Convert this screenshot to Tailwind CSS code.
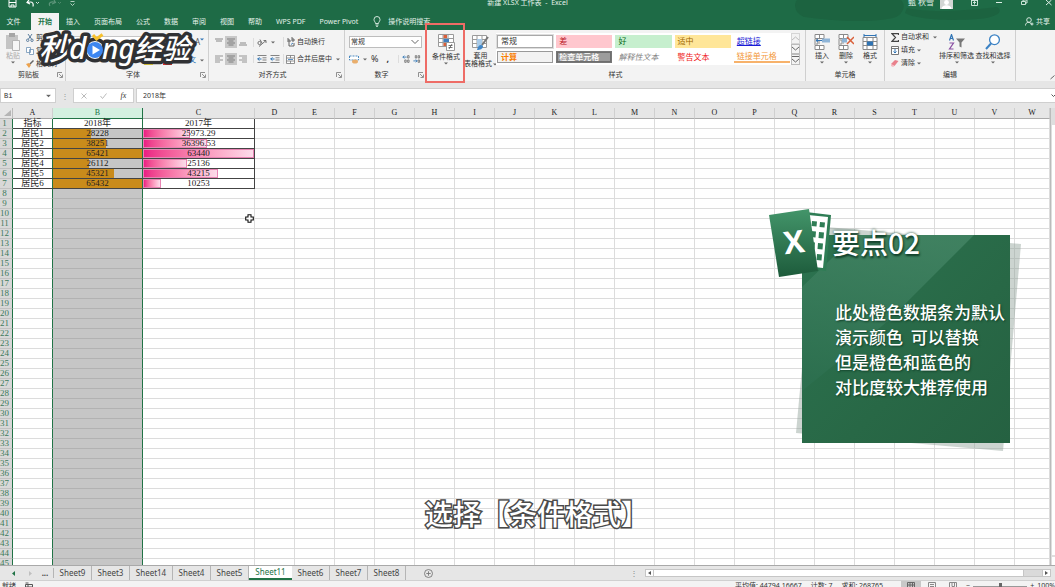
<!DOCTYPE html>
<html lang="zh-CN">
<head>
<meta charset="utf-8">
<title>新建 XLSX 工作表 - Excel</title>
<script src="https://cdn.jsdelivr.net/npm/@tailwindcss/browser@4"></script>
</head>
<body class="relative flex h-screen flex-col overflow-hidden bg-[#e6e6e6] font-['Noto_Sans','Noto_Sans_CJK_SC',sans-serif] text-[7px] leading-[10px] text-[#333]">

<header class="relative shrink-0 bg-[#1e6b46] text-[#e4f2ea]">
  <svg class="absolute right-0 top-0 h-[30px] w-[260px]" viewBox="0 0 260 30" fill="#1a5d3c" aria-hidden="true"><path d="M2 0h104c6 6 1 16-8 18-30 6-66 2-88-1C0 14-2 5 2 0z" opacity=".6"/><path d="M112 8c20 5 60 3 90-1 8 5-2 11-20 12-26 2-60 1-72-6z" opacity=".6"/></svg>
  <div class="relative flex h-3 items-start justify-between overflow-hidden">
    <div class="flex w-1/3 items-start gap-[9px] pl-2">
      <button aria-label="保存"><svg width="9" height="8" viewBox="0 0 9 8" fill="none" stroke="#fff"><path d="M1 0v7h7V0M1 2.5h7M3 7V5h3v2"/></svg></button>
      <button aria-label="撤消"><svg width="13" height="8" viewBox="0 0 13 8" fill="none" stroke="#fff" stroke-width="1.2"><path d="M3 0 1 2.5 4 4M1 2.5c4-1 7-1 6 4"/><path d="m10 2 1.500 1.500L13 2" stroke-width=".8"/></svg></button>
      <button aria-label="恢复"><svg width="13" height="8" viewBox="0 0 13 8" fill="none" stroke="#5c9479" stroke-width="1.200"><path d="m6 0 1.500 2.500L4 4M7 2.500C3 1 0 3 2 6"/><path d="m10 2 1.500 1.500L13 2" stroke-width=".8"/></svg></button>
      <button aria-label="自定义"><svg width="5" height="7" viewBox="0 0 5 7" fill="none" stroke="#d5e8dd" stroke-width=".8"><path d="M.5 1.500h4M.5 3.500l2 2 2-2"/></svg></button>
    </div>
    <h1 class="-mt-[2px] text-[7px]">新建 XLSX 工作表 &nbsp;-&nbsp; Excel</h1>
    <div class="flex w-1/3 items-start justify-end gap-[18px] pr-[3px]">
      <div class="flex gap-1.5"><span class="-mt-[3px] text-[8px]">甄 秋雪</span>
      <svg width="13" height="9" viewBox="0 0 13 9"><path fill="#d2d6d4" d="M0 0h13v9H0z"/><circle cx="6.500" cy="2.500" r="2.400" fill="#fff"/><path d="M1.500 9c0-5 10-5 10 0z" fill="#fff"/></svg></div>
      <button aria-label="功能区显示选项"><svg width="7" height="6" viewBox="0 0 7 6" fill="none" stroke="#dcefe5" stroke-width=".9"><path d="M.5-1v6.500h6V-1M.5.5h6M3.500 4.500v-3M2 3l1.500-1.500L5 3"/></svg></button>
      <button aria-label="最小化"><svg width="7" height="5" viewBox="0 0 7 5" stroke="#dcefe5"><path d="M0 2.500h6"/></svg></button>
      <button aria-label="还原"><svg width="7" height="6" viewBox="0 0 7 6" fill="none" stroke="#dcefe5" stroke-width=".9"><path d="M.5 1.500h4v3h-4zM2 1V0h4v3H5"/></svg></button>
      <button aria-label="关闭"><svg width="6" height="6" viewBox="0 0 6 6" stroke="#dcefe5"><path d="m0 0 5.500 5M5.500 0 0 5"/></svg></button>
    </div>
  </div>
  <nav class="relative flex h-[18px] items-stretch pr-[5px] pt-px">
    <button class="w-[31px] pr-1">文件</button>
    <button class="w-7 bg-[#f3f3f3] font-bold text-[#217346]">开始</button>
    <button class="px-[7px]">插入</button><button class="px-[7px]">页面布局</button><button class="px-[7px]">公式</button><button class="px-[7px]">数据</button><button class="px-[7px]">审阅</button><button class="px-[7px]">视图</button><button class="px-[7px]">帮助</button><button class="px-[7px]">WPS PDF</button><button class="px-[7px]">Power Pivot</button>
    <button class="ml-2 flex items-center gap-[7px]"><svg width="8" height="11" viewBox="0 0 8 11" fill="none" stroke="#e4f2ea" stroke-width=".9"><path d="M2.500 7.500C2.500 6 1 5.500 1 3.500a3 3 0 0 1 6 0c0 2-1.500 2.500-1.500 4zM2.500 9h3M3 10.300h2"/></svg>操作说明搜索</button>
    <button class="ml-auto flex items-center gap-[2px]"><svg width="9" height="9" viewBox="0 0 9 9" fill="none" stroke="#e4f2ea" stroke-width=".9"><circle cx="4" cy="3" r="2.300"/><path d="M.5 8.500c0-4 5-4 6-1M5.500 7h3M7 5.500v3"/></svg>共享</button>
  </nav>
</header>

<svg class="hidden" aria-hidden="true">
  <symbol id="dd" viewBox="0 0 4 3"><path d="M0 .5h4L2 2.500z" fill="#666"/></symbol>
  <symbol id="launch" viewBox="0 0 6 6"><path d="M.5 5V.5H5M2 2l3 3M5.500 2.500v3h-3" fill="none" stroke="#777" stroke-width=".8"/></symbol>
  <symbol id="al" viewBox="0 0 8 8"><path d="M0 1h8M0 3h5M0 5h8M0 7h5" stroke="#8a8a8a" stroke-width=".9"/></symbol>
  <symbol id="ac" viewBox="0 0 8 8"><path d="M0 1h8M1.500 3h5M0 5h8M1.500 7h5" stroke="#777" stroke-width=".9"/></symbol>
  <symbol id="ar" viewBox="0 0 8 8"><path d="M0 1h8M3 3h5M0 5h8M3 7h5" stroke="#8a8a8a" stroke-width=".9"/></symbol>
  <symbol id="ind" viewBox="0 0 9 8"><path d="M0 .5h9M5 2.800h4M5 5h4M0 7.500h9" stroke="#777" stroke-width=".9"/><path d="M0 4h4M2 2.300.3 4 2 5.700" stroke="#2f74b5" fill="none"/></symbol>
  <symbol id="cells" viewBox="0 0 16 16"><path d="M1 .5h9v4H1zM5.500.5v4M1 11.500h9v4H1zM5.500 11.500v4M1 5v6M3 5v2h3M3 11V9h3" fill="#fff" stroke="#8a8a8a"/></symbol>
</svg>

<section aria-label="功能区" class="flex h-[51px] shrink-0 bg-[#f3f3f3]">
  <div class="flex w-[66px] shrink-0 flex-col border-r border-[#cfcfcf]">
    <div class="flex h-10 gap-[5px] pl-[5px] pt-[3px]">
      <button class="flex w-4 flex-col items-center text-[#aaa]"><svg width="16" height="18" viewBox="0 0 16 18"><path d="M1 2h12v14H1z" fill="#c4c4c4"/><path d="M4 0h6v4H4z" fill="#a5a5a5"/><path d="M7.500 7.500h7v10h-7z" fill="#f6f6f6" stroke="#b5b5b5"/></svg>粘贴<svg width="4" height="3"><use href="#dd"/></svg></button>
      <div class="flex flex-col gap-[3px]">
        <button class="flex items-center gap-[2px]"><svg width="8" height="8" viewBox="0 0 8 8" fill="none" stroke="#5b7d9d"><path d="m2 0 3.500 5M6 0 2.500 5"/><circle cx="1.700" cy="6.300" r="1.200"/><circle cx="6" cy="6.300" r="1.200"/></svg>剪切</button>
        <button class="flex items-center gap-[2px]"><svg width="8" height="8" viewBox="0 0 8 8" fill="#fff" stroke="#6f93b5" stroke-width=".8"><path d="M.5.5h4v5h-4zM3.500 2.500h4v5h-4z"/></svg>复制</button>
        <button class="flex items-center gap-[2px]"><svg width="8" height="8" viewBox="0 0 8 8"><path d="m0 4 3-1 2 2-2 3z" fill="#eda24c"/><path d="m4 4 3.500-3.500" stroke="#666" stroke-width="1.500"/></svg>格式刷</button>
      </div>
    </div>
    <div class="flex items-center"><span class="flex-1 text-center">剪贴板</span><svg class="mr-0.5" width="6" height="6"><use href="#launch"/></svg></div>
  </div>

  <div class="flex w-[143px] shrink-0 flex-col border-r border-[#cfcfcf]">
    <div class="flex h-10 flex-col justify-between pb-[5px] pl-1 pr-1 pt-[6px]">
      <div class="flex items-center gap-1"><input aria-label="字体" class="h-3 w-[80px] border border-[#c6c6c6] bg-white px-1 text-[7px]"><input aria-label="字号" class="h-3 w-6 border border-[#c6c6c6] bg-white px-1 text-[7px]"><span class="ml-auto flex text-[8px] text-[#555]">A<svg class="mt-px" width="4" height="3" viewBox="0 0 4 3"><path d="M0 .5h4L2 2.500z" fill="#2f74b5"/></svg></span></div>
      <div class="flex items-center">
        <button aria-label="填充颜色" class="ml-[74px] h-[3px] w-[9px] self-end bg-[#fbe33a]"></button><button aria-label="字体颜色" class="ml-[10px] h-[3px] w-[9px] self-end bg-[#d8302b]"></button>
        <button class="ml-auto flex items-center gap-1 text-[7px] text-[#2f74b5]">文<svg width="4" height="3"><use href="#dd"/></svg></button></div>
    </div>
    <div class="flex items-center"><span class="flex-1 text-center">字体</span><svg class="mr-0.5" width="6" height="6"><use href="#launch"/></svg></div>
  </div>

  <div class="flex w-[136px] shrink-0 flex-col border-r border-[#cfcfcf]">
    <div class="flex h-10 flex-col gap-[5px] pl-[4px] pt-[6px]">
      <div class="flex h-3 items-center">
        <button aria-label="顶端对齐" class="grid h-3 w-3 place-items-center"><svg width="8" height="8" viewBox="0 0 8 8"><path d="M0 1h8M1 3h6" stroke="#888"/></svg></button>
        <button aria-label="垂直居中" class="grid h-3 w-3 place-items-center bg-[#c8c8c8]"><svg width="8" height="8"><use href="#ac"/></svg></button>
        <button aria-label="底端对齐" class="mr-1 grid h-3 w-3 place-items-center"><svg width="8" height="8" viewBox="0 0 8 8"><path d="M0 7h8M1 5h6" stroke="#888"/></svg></button>
        <button aria-label="方向" class="flex w-[30px] items-center gap-1 border-l border-[#ddd] pl-[3px]"><svg width="10" height="9" viewBox="0 0 10 9" fill="none" stroke="#666" stroke-width=".9"><circle cx="2.500" cy="5" r="1.600"/><path d="M3 1.500 5 5M2 8.500 9 2.500M9 5V2.500H6.500"/></svg><svg width="4" height="3"><use href="#dd"/></svg></button>
        <button class="flex items-center gap-[2px] border-l border-[#ddd] pl-[3px]"><svg width="8" height="10" viewBox="0 0 8 10" fill="none" stroke="#555" stroke-width=".9"><path d="M1 1v4h2V3H1M5 0v4h2V2H5M2 6v3h5V6"/><path d="M6 6 4 7.500" stroke="#2f74b5"/></svg>自动换行</button>
      </div>
      <div class="flex h-3 items-center">
        <button aria-label="左对齐" class="grid h-3 w-3 place-items-center"><svg width="8" height="8"><use href="#al"/></svg></button>
        <button aria-label="居中" class="grid h-3 w-3 place-items-center bg-[#c8c8c8]"><svg width="8" height="8"><use href="#ac"/></svg></button>
        <button aria-label="右对齐" class="mr-1 grid h-3 w-3 place-items-center"><svg width="8" height="8"><use href="#ar"/></svg></button>
        <span class="flex w-[30px] gap-[3px] border-l border-[#ddd] pl-[3px]"><svg width="10" height="8"><use href="#ind"/></svg><svg width="10" height="8"><use href="#ind"/></svg></span>
        <button class="flex items-center gap-[2px] border-l border-[#ddd] pl-[2px]"><svg width="9" height="9" viewBox="0 0 9 9" fill="#fff" stroke="#777" stroke-width=".8"><path d="M.5.5h8v8h-8zM.5 3h8M.5 6h8M4.500.5V3M4.500 6v2.500"/><path d="M2 4.500h5" stroke="#2f74b5"/></svg>合并后居中<svg class="ml-[2px]" width="4" height="3"><use href="#dd"/></svg></button>
      </div>
    </div>
    <div class="flex items-center"><span class="flex-1 text-center">对齐方式</span><svg class="mr-[2px]" width="6" height="6"><use href="#launch"/></svg></div>
  </div>

  <div class="flex w-[81px] shrink-0 flex-col">
    <div class="flex h-10 flex-col gap-[5px] px-1 pt-[6px]">
      <div class="flex h-3 items-center border border-[#bdbdbd] bg-white pl-px pr-[2px]"><select aria-label="数字格式" class="flex-1 appearance-none text-[7px] leading-[10px]"><option>常规</option></select><svg width="8" height="6" viewBox="0 0 8 6" fill="none" stroke="#666"><path d="m.5 1 3.500 3.500L7.500 1"/></svg></div>
      <div class="flex h-3 items-center gap-1 text-[9px]"><svg width="10" height="9" viewBox="0 0 10 9"><path d="M.5 1h9v4h-9z" fill="#fff" stroke="#4c8ac0" stroke-dasharray="2 1"/><ellipse cx="6" cy="6.500" rx="3" ry="2" fill="#e9ae6c"/></svg><svg width="4" height="3"><use href="#dd"/></svg><button>%</button><button class="ml-1 font-bold">,</button><svg class="ml-auto border-l border-[#ddd]" width="24" height="8" viewBox="0 0 24 8"><g fill="none" stroke="#666" stroke-width=".8"><path d="M9 .5h1.500v2.500H9zM6 5h1.500v2.500H6zM9 5h1.500v2.500H9zM17 .5h1.500V3H17zM20 .5h1.500V3H20zM20 5h1.500v2.500H20z"/></g><path d="M4 2h4M5.500.5 4 2l1.500 1.500M15 6h4M17.500 4.500 19 6l-1.500 1.500" stroke="#2f74b5" fill="none" stroke-width=".9"/></svg></div>
    </div>
    <div class="flex items-center"><span class="flex-1 text-center">数字</span><svg class="mr-0.5" width="6" height="6"><use href="#launch"/></svg></div>
  </div>

  <div class="flex w-[380px] shrink-0 flex-col border-r border-[#cfcfcf]">
    <div class="flex h-10 pt-[3px]">
      <button class="flex w-10 flex-col items-center pt-px"><svg class="mb-px" width="17" height="17" viewBox="0 0 17 17"><path d="M.5.5h15v12H.5zM.5 4.500h15M.5 8.500h15M5 .5v12M10 .5v12" fill="#fff" stroke="#9a9a9a"/><path d="M5.500 1H9v3H5.500zM5.500 9H8v3H5.500z" fill="#d9603b"/><path d="M5.500 5H11v3H5.500z" fill="#3f7fc0"/><path d="M8.500 8.500h8v8h-8z" fill="#fff" stroke="#999"/><path d="M10.500 11.500h4M10.500 13.500h4M14 10l-3 5" stroke="#555" stroke-width=".8"/></svg>条件格式<svg width="4" height="3"><use href="#dd"/></svg></button>
      <button class="flex w-[29px] flex-col items-center pt-[2px] leading-[8px]"><svg class="mb-px" width="17" height="16" viewBox="0 0 17 16"><path d="M.5.5h14v12H.5zM.5 4.500h14M.5 8.500h14M5 .5v12M10 .5v12" fill="#fff" stroke="#9a9a9a"/><path d="M5 4h5v8H5z" fill="#a9cbe8"/><path d="m16 2-6 8" stroke="#777" stroke-width="2"/><path d="M5 15c1-5 4-6 6-4 0 3-3 4-6 4z" fill="#3f86c8"/></svg>套用<span class="flex items-center whitespace-nowrap">表格格式<svg class="ml-px" width="4" height="3"><use href="#dd"/></svg></span></button>
      <div class="ml-px grid h-8 w-[295px] grid-cols-5 gap-x-[3px] gap-y-[3px] bg-white px-px py-[2px] text-left text-[8px] leading-[10px]">
        <button class="border border-[#a9a9a9] px-[3px] text-left outline-1 outline-[#ddd]">常规</button>
        <button class="bg-[#ffc7ce] px-[3px] text-left text-[#b8121c]">差</button>
        <button class="bg-[#c6efce] px-[3px] text-left text-[#0b6b18]">好</button>
        <button class="bg-[#ffe699] px-[3px] text-left text-[#9c6500]">适中</button>
        <button class="px-[3px] text-left text-[#1a1ad6] underline">超链接</button>
        <button class="border border-[#999] bg-[#f2f2f2] px-[3px] text-left font-bold text-[#fa7d00]">计算</button>
        <button class="border border-[#777] bg-[#9c9c9c] px-[2px] text-left font-medium text-white outline-1 -outline-offset-2 outline-[#6e6e6e]">检查单元格</button>
        <button class="px-[3px] text-left italic text-[#7f7f7f]">解释性文本</button>
        <button class="px-[3px] text-left text-[#f01616]">警告文本</button>
        <button class="border-b-2 border-[#f7b26b] px-[3px] text-left text-[#f39a3c]">链接单元格</button>
      </div>
      <div class="grid h-8 w-[9px] grid-rows-3">
        <button aria-label="上一行" class="grid place-items-center border border-[#d5d5d5]"><svg width="7" height="5" viewBox="0 0 7 5" fill="none" stroke="#bbb"><path d="m0 4 3.500-3L7 4"/></svg></button>
        <button aria-label="下一行" class="grid place-items-center border border-[#bbb]"><svg width="7" height="5" viewBox="0 0 7 5" fill="none" stroke="#666"><path d="m0 1 3.500 3L7 1"/></svg></button>
        <button aria-label="其他" class="grid place-items-center border border-[#bbb]"><svg width="7" height="7" viewBox="0 0 7 7" fill="none" stroke="#666"><path d="M0 .5h7M0 3l3.500 3L7 3"/></svg></button>
      </div>
    </div>
    <div class="text-center">样式</div>
  </div>

  <div class="flex w-[79px] shrink-0 flex-col border-r border-[#cfcfcf]">
    <div class="flex h-10 gap-[8px] pl-[8px] pt-1">
      <button class="flex w-4 flex-col items-center whitespace-nowrap"><svg class="mb-px shrink-0" width="16" height="16" viewBox="0 0 16 16"><use href="#cells"/><path d="M8 4.500h8v4H8z" fill="#8fb4d6"/><path d="M2 6.500h6M4 4.800 2 6.500l2 1.700" stroke="#2f74b5" fill="none"/></svg>插入<svg width="4" height="3"><use href="#dd"/></svg></button>
      <button class="flex w-4 flex-col items-center whitespace-nowrap"><svg class="mb-px shrink-0" width="16" height="16" viewBox="0 0 16 16"><use href="#cells"/><path d="M4 4.500h5v4H4z" fill="#8fb4d6"/><path d="m9 3 7 7M16 3l-7 7" stroke="#d9603b" stroke-width="1.500"/></svg>删除<svg width="4" height="3"><use href="#dd"/></svg></button>
      <button class="flex w-4 flex-col items-center whitespace-nowrap"><svg class="mb-px shrink-0" width="16" height="16" viewBox="0 0 16 16"><path d="M1 3.500h14v12H1zM1 7.500h14M1 11.500h14M5 3.500v12M11 3.500v12" fill="#fff" stroke="#8a8a8a"/><path d="M5 7.500h6v4H5z" fill="#2f74b5"/><path d="M2 1.500h12M2 0v3M14 0v3" stroke="#2f74b5"/></svg>格式<svg width="4" height="3"><use href="#dd"/></svg></button>
    </div>
    <div class="text-center">单元格</div>
  </div>

  <div class="flex w-[131px] shrink-0 flex-col border-r border-[#cfcfcf]">
    <div class="flex h-10 pl-[6px] pt-[2px]">
      <div class="flex w-[47px] flex-col gap-[3px]">
        <button class="flex items-center gap-[2px] whitespace-nowrap"><svg width="8" height="9" viewBox="0 0 8 9" fill="none" stroke="#444" stroke-width="1.200"><path d="M7.500 2V.7H1L4.500 4.500 1 8.300h6.500V7"/></svg>自动求和<svg class="ml-0.5" width="4" height="3"><use href="#dd"/></svg></button>
        <button class="flex items-center gap-[2px]"><svg width="8" height="9" viewBox="0 0 8 9" fill="#fff" stroke="#777"><path d="M.5.5h7v8h-7zM.5 2.500h7"/><path d="M4 3v4M2.500 5.500 4 7l1.500-1.500" stroke="#2f74b5"/></svg>填充<svg width="4" height="3"><use href="#dd"/></svg></button>
        <button class="flex items-center gap-[2px]"><svg width="8" height="8" viewBox="0 0 8 8"><path d="m0 5 4-4 3.500 1-4 5z" fill="#e9808c"/><path d="m0 5 3.500 2L2 8 0 7z" fill="#f5b9c0"/></svg>清除<svg width="4" height="3"><use href="#dd"/></svg></button>
      </div>
      <button class="flex w-[37px] flex-col items-center whitespace-nowrap pt-[2px]"><svg class="mb-px" width="18" height="16" viewBox="0 0 18 16" fill="none" stroke-width="1.200"><path d="m1.500 6.500 2-6 2 6M2 4.500h3" stroke="#2f74b5"/><path d="M1.500 9h4l-4 6h4" stroke="#8a4fa3"/><path d="M8 4.500h9l-3.500 4v5l-2-1V8.500z" fill="#777"/></svg>排序和筛选<svg width="4" height="3"><use href="#dd"/></svg></button>
      <button class="flex w-9 flex-col items-center whitespace-nowrap pt-[2px]"><svg class="mb-px" width="16" height="16" viewBox="0 0 16 16" fill="none"><circle cx="9.500" cy="5.700" r="4.900" stroke="#3b82c4" stroke-width="1.300" fill="#fff"/><path d="m6 9.500-5 5.500" stroke="#3b82c4" stroke-width="2"/></svg>查找和选择<svg width="4" height="3"><use href="#dd"/></svg></button>
    </div>
    <div class="text-center">编辑</div>
  </div>
  <button aria-label="折叠功能区" class="ml-auto self-end"><svg width="5" height="6" viewBox="0 0 5 6" fill="none" stroke="#666"><path d="m.5 4 4-3.500"/></svg></button>
</section>

<div class="flex h-[27px] shrink-0 items-start pt-[7px]">
  <div class="flex h-[15px] w-[56px] items-center border border-[#cfcfcf] bg-white pr-1"><input aria-label="名称框" value="B1" class="min-w-0 flex-1 pl-[3px] font-['Liberation_Mono',monospace] text-[7px]"><svg width="5" height="4" viewBox="0 0 4 3"><use href="#dd"/></svg></div>
  <span class="grid h-[15px] w-[17px] place-items-center text-[8px] text-[#999]">⋮</span>
  <div class="flex h-[15px] w-[61px] items-center justify-around border border-[#cfcfcf] bg-white">
    <button aria-label="取消"><svg width="6" height="6" viewBox="0 0 6 6" stroke="#bbb"><path d="m.5.5 5 5M5.500.5l-5 5"/></svg></button>
    <button aria-label="输入"><svg width="7" height="6" viewBox="0 0 7 6" fill="none" stroke="#bbb"><path d="m.5 3 2 2.500 4-5"/></svg></button>
    <button aria-label="插入函数" class="font-['Liberation_Serif',serif] text-[8px] italic">fx</button>
  </div>
  <div class="ml-[2px] flex h-[15px] flex-1 items-center border border-r-0 border-[#cfcfcf] bg-white"><input aria-label="编辑栏" value="2018年" class="min-w-0 flex-1 pl-[6px] text-[7px]"><svg width="4" height="5" viewBox="0 0 4 5" fill="none" stroke="#555"><path d="m.5 1.500 2 2 2-2"/></svg></div>
</div>

<main class="flex min-h-0 flex-1 overflow-hidden">
  <div class="min-w-0 flex-1 overflow-hidden border-r border-[#bbb] bg-white">
    <table class="w-full table-fixed border-separate border-spacing-0 text-center font-['Liberation_Serif','Noto_Sans_CJK_SC',serif] text-[9px] leading-[9px] text-[#222]">
      <colgroup id="cols"></colgroup>
      <thead><tr id="head"></tr></thead>
      <tbody id="body"></tbody>
    </table>
  </div>
  <div class="flex w-1 shrink-0 flex-col justify-end bg-[#dedede] pl-px"><div class="mb-[2px] h-[430px] bg-white"></div><button aria-label="向下滚动" class="h-2 bg-white"></button></div>
</main>

<footer class="shrink-0">
  <div class="flex h-[15px] items-center border-t border-[#a9a9a9] text-[8px] text-[#444]">
    <svg class="ml-3 mr-[9px]" width="20" height="5" viewBox="0 0 20 5"><path d="M3 0v5L0 2.500z" fill="#217346"/><path d="M17 0v5l3-2.500z" fill="#c0c0c0"/></svg>
    <button class="w-[13px] border-r border-[#b5b5b5] pr-1 font-bold leading-[10px]">...</button>
    <div id="tabs" class="flex h-full leading-[10px]"></div>
    <button aria-label="新工作表" class="ml-[18px]"><svg width="9" height="9" viewBox="0 0 9 9" fill="none" stroke="#777" stroke-width=".9"><circle cx="4.500" cy="4.500" r="4"/><path d="M2.300 4.500h4.400M4.500 2.300v4.400"/></svg></button>
    <div class="ml-auto flex w-[41%] max-w-[425px] items-center gap-[7px] pr-1"><span class="text-[#888]">⋮</span>
      <div class="flex h-2 flex-1 items-stretch border border-[#c6c6c6] bg-[#dadada]"><button aria-label="向左滚动" class="w-2 border-r border-[#c6c6c6] bg-white"><svg class="m-auto" width="3" height="4" viewBox="0 0 3 4"><path d="M3 0v4L0 2z" fill="#555"/></svg></button><div class="mr-[18px] flex-1 border-r border-[#c6c6c6] bg-white"></div><button aria-label="向右滚动" class="w-2 border-l border-[#c6c6c6] bg-white"><svg class="m-auto" width="3" height="4" viewBox="0 0 3 4"><path d="M0 0v4l3-2z" fill="#555"/></svg></button></div>
    </div>
  </div>
  <div class="h-[7px] overflow-hidden border-t border-[#d0d0d0] bg-[#f3f3f3]">
    <div class="flex h-[10px] items-center gap-[9px] pl-[2px] text-[7px]">
      <span>就绪</span><svg width="8" height="8" viewBox="0 0 8 8" fill="none" stroke="#555"><path d="M.5 2.500h7v5h-7zM.5 1h3M3 2.500v5M.5 5h7"/></svg>
      <span class="ml-auto">平均值: 44794.16667</span><span>计数: 7</span><span>求和: 268765</span>
      <div class="ml-[9px] flex items-center gap-[3px]">
        <div class="flex"><span class="grid h-3 w-5 place-items-center bg-[#c8c8c8]"><svg width="8" height="8" viewBox="0 0 8 8" fill="none" stroke="#666"><path d="M.5.5h7v7h-7zM.5 3h7M.5 5.500h7M3 .5v7M5.500.5v7"/></svg></span><span class="grid h-3 w-[21px] place-items-center"><svg width="8" height="8" viewBox="0 0 8 8" fill="none" stroke="#888"><path d="M.5.500h7v7h-7zM2 2.500h4M2 4.500h4"/></svg></span><span class="grid h-3 w-[21px] place-items-center"><svg width="8" height="8" viewBox="0 0 8 8" fill="none" stroke="#888"><path d="M.5.500h7v7h-7zM3 .5v4h2.500v-4"/></svg></span></div>
        <label class="flex items-center gap-[3px]">−<input type="range" aria-label="缩放" class="h-2 w-[54px] appearance-none bg-[linear-gradient(#999,#999)] bg-[length:100%_1px] bg-center bg-no-repeat [&::-webkit-slider-thumb]:h-[7px] [&::-webkit-slider-thumb]:w-[3px] [&::-webkit-slider-thumb]:appearance-none [&::-webkit-slider-thumb]:bg-[#666]">+</label><span>100%</span>
      </div>
    </div>
  </div>
</footer>

<!-- Red frame around the conditional-format command -->
<div class="pointer-events-none absolute left-[425px] top-[23px] h-[60px] w-10 border-2 border-[#ee6c66]"></div>

<!-- Cell cursor -->
<svg class="pointer-events-none absolute left-[245px] top-[214px]" width="9" height="9" viewBox="0 0 9 9"><path d="M3 .7h3V3h2.300v3H6v2.300H3V6H.7V3H3z" fill="#fff" stroke="#111" stroke-width="1.100"/></svg>

<!-- Channel logo -->
<svg class="pointer-events-none absolute left-[36px] top-[26px]" width="162" height="44" viewBox="0 0 162 44" role="img" aria-label="秒dong经验">
  <g font-family="'Noto Sans','Noto Sans CJK SC',sans-serif" font-weight="500" font-style="italic" fill="#fff" stroke="#303134" stroke-width="7" stroke-linejoin="round" paint-order="stroke">
    <circle cx="59" cy="24" r="9"/>
    <text x="3" y="34" font-size="31">秒</text>
    <text x="33" y="33" font-size="30">d</text>
    <text x="66" y="33" font-size="28">ng</text>
    <text x="98" y="33" font-size="28">经验</text>
  </g>
  <g fill="#fff" aria-hidden="true">
    <circle cx="59" cy="24" r="8" fill="#3d86f0"/><path d="m56.500 19.500 7.500 4.500-7.500 4.500z"/>
    <path d="m57 9 3.500 4 6-4.500" fill="none" stroke="#f6c12d" stroke-width="3"/>
  </g>
</svg>

<!-- Key-point note -->
<aside class="absolute left-[766px] top-[206px] h-[248px] w-[260px] font-['Noto_Sans_CJK_SC',sans-serif] text-white">
  <svg class="absolute inset-0" width="260" height="248" viewBox="0 0 260 248" aria-hidden="true">
    <defs>
      <linearGradient id="card" x1="0" y1="0" x2="1" y2="1"><stop offset="0" stop-color="#2c7350"/><stop offset=".6" stop-color="#286846"/><stop offset="1" stop-color="#256141"/></linearGradient>
      <linearGradient id="gloss" x1=".6" y1="0" x2=".4" y2="1"><stop offset="0" stop-color="#468767"/><stop offset="1" stop-color="#2d7050"/></linearGradient>
      <linearGradient id="book" x1="0" y1="0" x2="0" y2="1"><stop offset="0" stop-color="#43956a"/><stop offset="1" stop-color="#1d5b3b"/></linearGradient>
    </defs>
    <path d="m49 20 206 18-18 207-207-18z" fill="#8d9f97" opacity=".45"/>
    <path d="M36 29h208v208H36z" fill="url(#card)"/>
    <path d="M90 29h118l-86 86-86 70V81z" fill="url(#gloss)" opacity=".75"/>
    <path d="m40 6 25 3-5 56-22-3z" fill="#2f7d55"/><path d="m42 9 20 2-5 51-18-2z" fill="#fff"/>
    <path d="m46 15 5 .5-.5 5-5-.5zM54 16l5 .5-.5 5-5-.5zM45 25l5 .5-.5 6-5-.5zM53 26l5 .5-.5 6-5-.5zM45 36l4 .5-.5 6-4-.5zM52 37l5 .5-.5 6-5-.5zM51 48l5 .5-.5 6-5-.5z" fill="#2f7d55"/>
    <path d="m3 9 40-6 9 62-39 6z" fill="url(#book)"/>
    <text x="28" y="47" text-anchor="middle" transform="rotate(-7 28 36)" font-family="'Open Sans',sans-serif" font-weight="700" font-size="31" fill="#fff">X</text>
  </svg>
  <h2 class="relative ml-[66px] mt-[20px] text-[28px] font-medium leading-[32px] [text-shadow:1px_2px_2px_#12402a,0_0_3px_#12402a]">要点02</h2>
  <p class="relative ml-[69px] mt-[41px] whitespace-nowrap text-[17px] font-medium leading-[25px] [text-shadow:1px_1px_2px_#12402a]">此处橙色数据条为默认<br>演示颜色&nbsp;&nbsp;可以替换<br>但是橙色和蓝色的<br>对比度较大推荐使用</p>
</aside>

<!-- Subtitle -->
<p class="pointer-events-none absolute left-[425px] top-[497px] whitespace-nowrap font-['Noto_Sans_CJK_SC',sans-serif] text-[28px] font-medium leading-[32px] text-white [-webkit-text-stroke:3px_#4a4a4a] [paint-order:stroke_fill]">选择【条件格式】</p>

<script>
const letters = 'ABCDEFGHIJKLMNOPQRSTUVW'.split('');
document.getElementById('cols').innerHTML = letters.map((l, i) =>
  `<col class="${i === 1 ? 'w-[90px]' : i === 2 ? 'w-[112px]' : i === 22 ? '' : 'w-[40px]'}">`).join('');
document.getElementById('cols').insertAdjacentHTML('afterbegin', '<col class="w-[13px]">');
document.getElementById('head').innerHTML =
  '<th class="h-[11px] border-b border-r border-[#bbb] bg-[#e6e6e6] p-0"><svg class="ml-auto" width="8" height="7" viewBox="0 0 8 7"><path d="M7 0v6H0z" fill="#b5b5b5"/></svg></th>' +
  letters.map((l, i) => `<th scope="col" class="h-[11px] border-b border-r p-0 text-[8px] leading-[10px] ${i === 1 ? 'border-[#217346] bg-[#d3f0e0] font-normal text-[#217346]' : 'border-b-[#aaa] border-r-[#cfcfcf] bg-[#e6e6e6] font-normal'}">${l}</th>`).join('');
const data = [
  ['指标', '2018年', '2017年'],
  ['居民1', '28228', '25973.29', 43, 42], ['居民2', '38251', '36396.53', 59, 58],
  ['居民3', '65421', '63440', 100, 100], ['居民4', '26112', '25136', 40, 40],
  ['居民5', '45321', '43215', 69, 68], ['居民6', '65432', '10253', 100, 16]];
let html = '';
for (let r = 1; r <= 45; r++) {
  const d = data[r - 1];
  html += `<tr><th scope="row" class="h-[10px] border-b border-r border-b-[#c2c2c2] border-r-[#217346] bg-[#d8d8d8] p-0 pr-[3px] font-normal text-[#3d7a5b]">${r}</th>`;
  for (let c = 0; c < 23; c++) {
    let cls = 'border-[#dcdcdc]', inner = '';
    if (c === 0) cls = d ? 'border-b-[#444] border-r-[#217346]' : 'border-b-[#dcdcdc] border-r-[#217346]';
    if (c === 1) cls = d ? (r === 1 ? 'border-b-[#444] border-r-[#217346]' : 'border-b-[#444] border-r-[#217346] bg-[#c6c6c6]') : 'border-b-[#b2b2b2] border-r-[#217346] bg-[#c6c6c6]';
    if (c === 2 && d) cls = 'border-[#444]';
    if (d && c < 3) {
      const w = c ? d[c + 2] : 0;
      const bar = !w ? '' : c === 1
        ? `<i class="h-[9px] bg-[#c98b1b] [grid-area:1/1]" style="width:${w}%"></i>`
        : `<i class="h-[9px] border border-[#e884b4] bg-linear-to-r from-[#ea1c83] to-[#fbdcea] [grid-area:1/1]" style="width:${w}%"></i>`;
      inner = `<div class="grid h-[9px]">${bar}<span class="[grid-area:1/1]">${d[c]}</span></div>`;
    }
    html += `<td class="h-[10px] border-b border-r p-0 ${cls}">${inner}</td>`;
  }
  html += '</tr>';
}
document.getElementById('body').innerHTML = html;
document.getElementById('tabs').innerHTML = [9, 3, 14, 4, 5, 11, 6, 7, 8].map(n =>
  `<button class="${n === 11 ? 'w-[43px] border-b-2 border-[#217346] bg-white text-[#217346]' : n === 14 ? 'w-[43px] border-r border-[#b5b5b5]' : 'w-[38px] border-r border-[#b5b5b5]'}">Sheet${n}</button>`).join('');
</script>
</body>
</html>
